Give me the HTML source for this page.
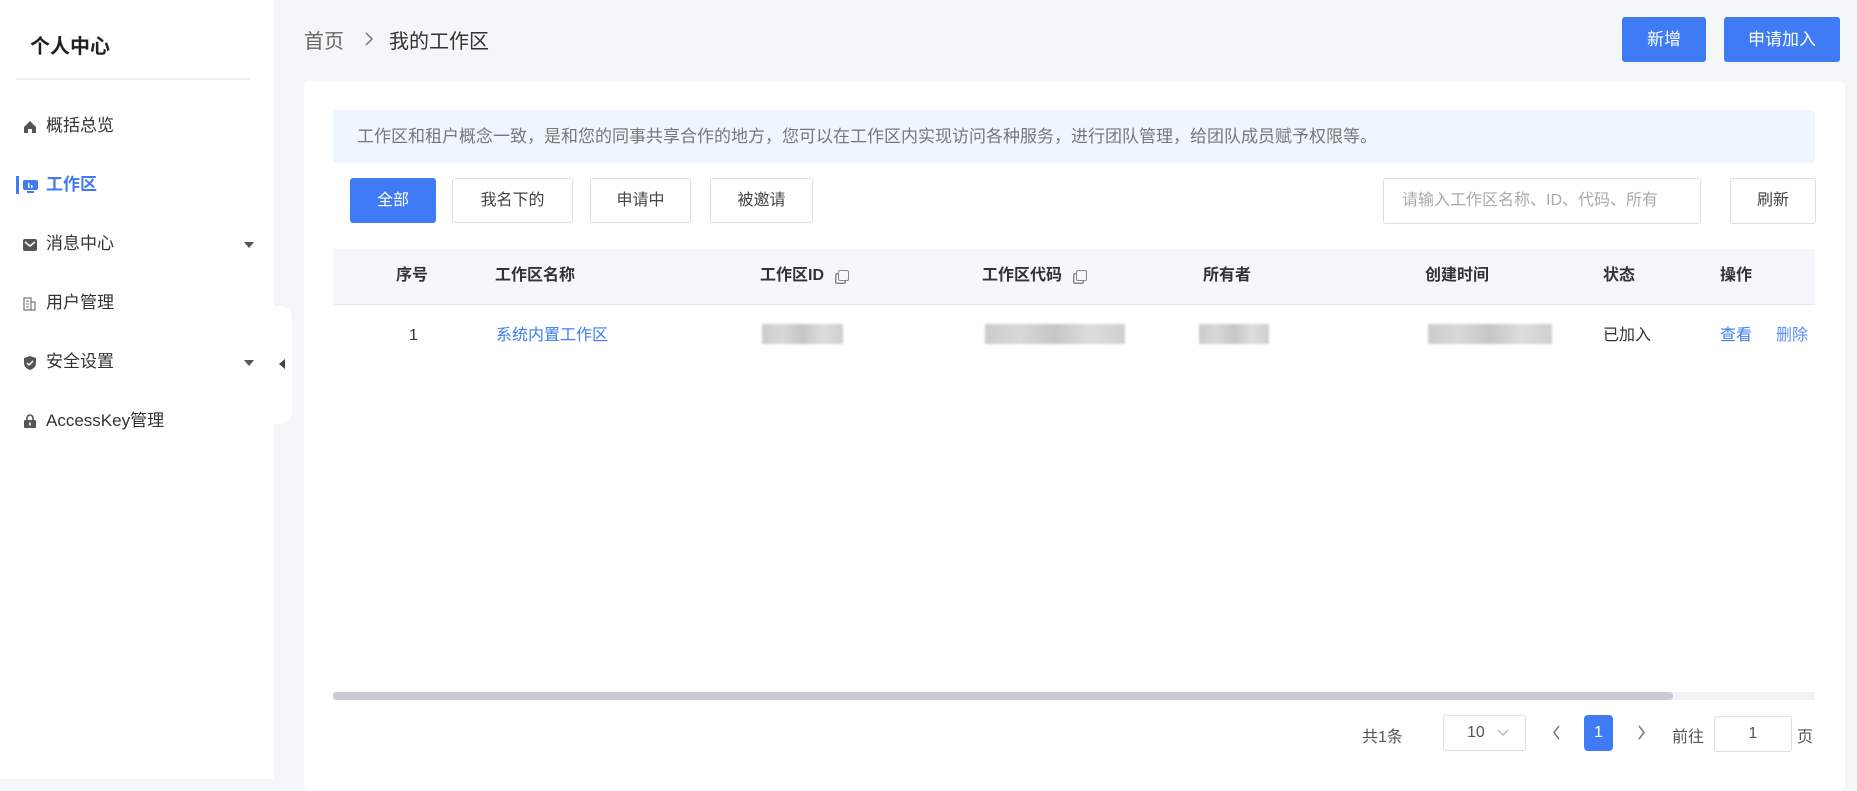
<!DOCTYPE html>
<html><head><meta charset="utf-8"><style>
*{box-sizing:border-box;margin:0;padding:0}
body{width:1857px;height:779px;overflow:hidden;background:#f5f6f8;font-family:"Liberation Sans","Noto Sans CJK SC",sans-serif;color:#333;position:relative}
.a{position:absolute;white-space:nowrap}
.side{position:absolute;left:0;top:0;width:274px;height:779px;background:#fff}
.mi{position:absolute;left:46px;font-size:17px;color:#333;line-height:20px}
.btn{position:absolute;border:1px solid #dcdfe6;border-radius:3px;background:#fff;font-size:16px;color:#444;text-align:center}
.bb{position:absolute;background:#3e7bf5;border-radius:3px;color:#fff;font-size:17px;text-align:center}
.th{position:absolute;top:266px;font-size:16px;font-weight:bold;color:#333;line-height:20px}
.td{position:absolute;top:326px;font-size:16px;line-height:20px}
.blur{position:absolute;height:20px;top:324px;background:linear-gradient(90deg,#ccc,#d8d8d8,#c6c6c6,#ddd,#cfcfcf);filter:blur(1px)}
.cp{display:inline-block;width:11px;height:11px;border:1.5px solid #888;border-radius:2px;margin-left:14px;vertical-align:-1px;box-shadow:-3px 3px 0 -1.5px #fff,-3px 3px 0 0 #888}
</style></head><body>
<div class="side">
  <div class="a" style="left:30px;top:30px;font-size:20px;font-weight:bold;color:#222">个人中心</div>
  <div class="a" style="left:16px;top:78px;width:234px;height:2px;background:#eef0f3"></div>
  <svg class="a" style="left:23px;top:120px" width="14" height="14" viewBox="0 0 14 14"><path d="M7 1L1 7v6h4V9h4v4h4V7z" fill="#555"/></svg>
  <div class="mi" style="top:116px">概括总览</div>
  <div class="a" style="left:16px;top:176px;width:3px;height:18px;background:#3e7bf5"></div>
  <svg class="a" style="left:23px;top:179px" width="15" height="15" viewBox="0 0 15 15"><rect x="0" y="1" width="15" height="10" rx="2" fill="#3e7bf5"/><rect x="4" y="12" width="7" height="2" fill="#3e7bf5"/><rect x="5" y="4" width="1.5" height="5" fill="#fff"/><rect x="8" y="6" width="1.5" height="3" fill="#fff"/></svg>
  <div class="mi" style="top:175px;color:#3e7bf5;font-weight:bold">工作区</div>
  <svg class="a" style="left:23px;top:239px" width="14" height="12" viewBox="0 0 14 12"><rect width="14" height="12" rx="2" fill="#555"/><path d="M2 3l5 4 5-4" stroke="#fff" stroke-width="1.5" fill="none"/></svg>
  <div class="mi" style="top:234px">消息中心</div>
  <div class="a" style="left:244px;top:242px;border:5px solid transparent;border-top:6px solid #555"></div>
  <svg class="a" style="left:23px;top:297px" width="13" height="14" viewBox="0 0 13 14"><path d="M1 1h7v12H1zM8 5h4v8H8z" fill="none" stroke="#777" stroke-width="1.2"/><path d="M3 4h3M3 7h3M3 10h3" stroke="#777"/></svg>
  <div class="mi" style="top:293px">用户管理</div>
  <svg class="a" style="left:24px;top:356px" width="12" height="14" viewBox="0 0 12 14"><path d="M6 0L0 2v5c0 4 3 6 6 7 3-1 6-3 6-7V2z" fill="#555"/><path d="M3 7l2 2 4-4" stroke="#fff" stroke-width="1.5" fill="none"/></svg>
  <div class="mi" style="top:352px">安全设置</div>
  <div class="a" style="left:244px;top:360px;border:5px solid transparent;border-top:6px solid #555"></div>
  <svg class="a" style="left:24px;top:414px" width="12" height="14" viewBox="0 0 12 14"><path d="M3 6V4a3 3 0 016 0v2" stroke="#555" stroke-width="1.6" fill="none"/><rect x="0" y="6" width="12" height="8" rx="1" fill="#555"/><rect x="5.2" y="8.5" width="1.6" height="3" fill="#fff"/></svg>
  <div class="mi" style="top:411px">AccessKey管理</div>
</div>
<div class="a" style="left:262px;top:306px;width:30px;height:118px;background:#fff;border-radius:0 12px 12px 0"></div>
<div class="a" style="left:279px;top:359px;border:5px solid transparent;border-right:6px solid #444;border-left:0"></div>

<div class="a" style="left:304px;top:25px;font-size:20px;color:#666">首页</div>
<svg class="a" style="left:364px;top:31px" width="10" height="16" viewBox="0 0 10 16"><path d="M2 2l6 6-6 6" stroke="#777" stroke-width="1.5" fill="none"/></svg>
<div class="a" style="left:389px;top:25px;font-size:20px;color:#333">我的工作区</div>
<div class="bb" style="left:1622px;top:17px;width:84px;height:45px;line-height:45px">新增</div>
<div class="bb" style="left:1724px;top:17px;width:116px;height:45px;line-height:45px">申请加入</div>

<div class="a" style="left:304px;top:81px;width:1541px;height:710px;background:#fff;border-radius:6px"></div>
<div class="a" style="left:333px;top:110px;width:1482px;height:53px;background:#f0f6ff;border-radius:4px;padding-left:24px;line-height:53px;font-size:17px;color:#777">工作区和租户概念一致，是和您的同事共享合作的地方，您可以在工作区内实现访问各种服务，进行团队管理，给团队成员赋予权限等。</div>
<div class="bb" style="left:350px;top:178px;width:86px;height:45px;line-height:45px;font-size:16px">全部</div>
<div class="btn" style="left:452px;top:178px;width:121px;height:45px;line-height:43px">我名下的</div>
<div class="btn" style="left:590px;top:178px;width:101px;height:45px;line-height:43px">申请中</div>
<div class="btn" style="left:710px;top:178px;width:103px;height:45px;line-height:43px">被邀请</div>
<div class="btn" style="left:1383px;top:178px;width:318px;height:46px;line-height:44px;text-align:left;padding-left:18px;color:#aaa;overflow:hidden">请输入工作区名称、ID、代码、所有</div>
<div class="btn" style="left:1730px;top:178px;width:86px;height:46px;line-height:44px">刷新</div>

<div class="a" style="left:333px;top:249px;width:1482px;height:56px;background:#f5f7fa;border-bottom:1px solid #e6e8ec"></div>
<div class="th" style="left:396px">序号</div>
<div class="th" style="left:495px">工作区名称</div>
<div class="th" style="left:760px">工作区ID<span class="cp"></span></div>
<div class="th" style="left:982px">工作区代码<span class="cp"></span></div>
<div class="th" style="left:1203px">所有者</div>
<div class="th" style="left:1425px">创建时间</div>
<div class="th" style="left:1603px">状态</div>
<div class="th" style="left:1720px">操作</div>

<div class="td" style="left:409px;color:#333">1</div>
<div class="td" style="left:496px;color:#3e7bf5">系统内置工作区</div>
<div class="blur" style="left:762px;width:81px"></div>
<div class="blur" style="left:985px;width:140px"></div>
<div class="blur" style="left:1199px;width:70px"></div>
<div class="blur" style="left:1428px;width:124px"></div>
<div class="td" style="left:1603px;color:#333">已加入</div>
<div class="td" style="left:1720px;color:#3e7bf5">查看</div>
<div class="td" style="left:1776px;color:#5b8ef5">删除</div>

<div class="a" style="left:333px;top:692px;width:1482px;height:8px;background:#f2f3f5"></div>
<div class="a" style="left:333px;top:692px;width:1340px;height:8px;background:#c8cbd2;border-radius:4px"></div>
<div class="a" style="left:1362px;top:723px;font-size:16px;color:#555">共1条</div>
<div class="btn" style="left:1443px;top:715px;width:83px;height:36px;line-height:34px;font-size:16px;color:#555;text-align:left;padding-left:23px">10</div>
<svg class="a" style="left:1497px;top:729px" width="12" height="8" viewBox="0 0 12 8"><path d="M1 1l5 5 5-5" stroke="#aaa" stroke-width="1.2" fill="none"/></svg>
<svg class="a" style="left:1552px;top:725px" width="9" height="15" viewBox="0 0 9 15"><path d="M7 1L2 7.5 7 14" stroke="#777" stroke-width="1.5" fill="none"/></svg>
<div class="bb" style="left:1584px;top:715px;width:29px;height:36px;line-height:36px;font-size:16px;border-radius:4px">1</div>
<svg class="a" style="left:1637px;top:725px" width="9" height="15" viewBox="0 0 9 15"><path d="M2 1l5 6.5L2 14" stroke="#777" stroke-width="1.5" fill="none"/></svg>
<div class="a" style="left:1672px;top:723px;font-size:16px;color:#555">前往</div>
<div class="btn" style="left:1714px;top:716px;width:78px;height:36px;line-height:34px;font-size:16px;color:#555">1</div>
<div class="a" style="left:1797px;top:723px;font-size:16px;color:#555">页</div>
</body></html>
